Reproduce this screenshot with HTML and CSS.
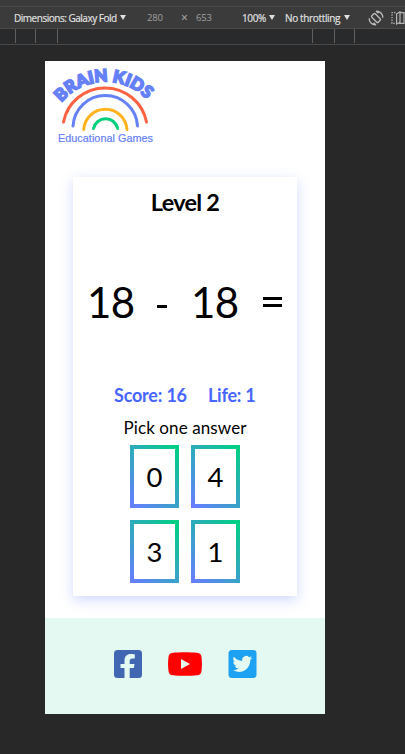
FILE: index.html
```
<!DOCTYPE html>
<html lang="en">
<head>
<meta charset="utf-8">
<title>Brain Kids</title>
<link rel="stylesheet" href="styles.css">
</head>
<body>
<div class="topline"></div>
<header class="toolbar">
  <span class="device">Dimensions: Galaxy Fold</span><i class="caret"></i>
  <span class="dim width">280</span>
  <span class="times">×</span>
  <span class="dim height">653</span>
  <span class="zoom">100%</span><i class="caret"></i>
  <span class="throttle">No throttling</span><i class="caret"></i>
  <svg class="rotate" width="16" height="16" viewBox="0 0 16 16" fill="none" stroke="#bdbdbd" stroke-width="1.3">
    <rect x="5.6" y="3.5" width="4.8" height="9" rx="1" transform="rotate(-45 8 8)"/>
    <path d="M8.2 1.2C12 1 15 4 14.8 7.8M7.8 14.8C4 15 1 12 1.2 8.2M8 1l2.5 2.3M8 15l-2.5-2.3"/>
  </svg>
  <svg class="posture" width="14" height="14" viewBox="0 0 14 14" fill="none" stroke="#b5b5b5" stroke-width="1.2">
    <path d="M4.5 1.6H1v10.8h3.500" stroke-dasharray="1.4 1.2"/>
    <path d="M5.600 3L9 .8v10.400L5.600 13zM9 1.600h4v10.800H8"/>
  </svg>
</header>
<div class="ruler"><i></i><i></i><i></i><i></i><i></i><i></i></div>
<main class="phone">
  <svg class="logo" width="108" height="84" viewBox="0 0 108 84">
    <defs><path id="arc" d="M9.500 38.500A57 57 0 0 1 97.500 38.500"/></defs>
    <text class="brand"><textPath href="#arc" textLength="96" lengthAdjust="spacingAndGlyphs">BRAIN KIDS</textPath></text>
    <g fill="none" stroke-width="3" stroke-linecap="round">
      <path stroke="#ff6243" d="M11.500 58A42.300 42.300 0 0 1 94.500 58"/>
      <path stroke="#6680f8" d="M21 62A32.300 32.300 0 0 1 85.500 62"/>
      <path stroke="#ffb31f" d="M31.700 65.500A21.700 21.700 0 0 1 75 65.500"/>
      <path stroke="#00cf7e" d="M41.500 64.500A12.400 12.400 0 0 1 65.700 64.500"/>
    </g>
    <text class="tag" x="6" y="77.500" textLength="95">Educational Games</text>
  </svg>
  <section class="card">
    <h1>Level 2</h1>
    <div class="question"><span>18</span><span class="minus"></span><span>18</span><span class="equals"></span></div>
    <div class="status"><span class="score">Score: 16</span><span class="life">Life: 1</span></div>
    <p>Pick one answer</p>
    <div class="answers">
      <button>0</button><button>4</button><button>3</button><button>1</button>
    </div>
  </section>
  <footer>
    <svg width="28" height="28" viewBox="0 0 28 28"><rect width="28" height="28" rx="3.500" fill="#4267b2"/><path fill="#e4f9f1" d="M10.500 28V18H6.500v-4h4v-3.500c0-4.300 2.500-6.500 6.300-6.500 1.900 0 4 .4 4 .4v4H18.500c-2.300 0-2.800 1.300-2.800 2.700V14h4.800l-.7 4h-4.100v10z"/></svg>
    <svg width="34" height="24" viewBox="0 0 34 24"><path fill="#f00" d="M5 .7C12 0 22 0 29 .7c3 .3 4.200 1.600 4.500 4.300.6 4.500.6 9.500 0 14-.3 2.700-1.500 4-4.500 4.300-7 .7-17 .7-24 0C2 23 .8 21.700.5 19c-.6-4.500-.6-9.500 0-14C.8 2.300 2 1 5 .7z"/><path fill="#e4f9f1" d="M13 7l9 5-9 5z"/></svg>
    <svg width="29" height="28" viewBox="0 0 29 28"><rect x=".5" width="28" height="28" rx="3.500" fill="#1da1f2"/><path fill="#e4f9f1" transform="translate(4.600 4.100) scale(.82)" d="M23.950 4.570a10 10 0 0 1-2.820.77 4.960 4.960 0 0 0 2.160-2.720c-.95.550-2 .950-3.130 1.180a4.920 4.920 0 0 0-8.380 4.480C7.690 8.100 4.070 6.130 1.640 3.160a4.920 4.920 0 0 0 1.520 6.570 4.900 4.900 0 0 1-2.230-.610v.060a4.920 4.920 0 0 0 3.950 4.830 5 5 0 0 1-2.210.080 4.940 4.940 0 0 0 4.600 3.420A9.870 9.870 0 0 1 0 19.540a14 14 0 0 0 7.550 2.210c9.050 0 14-7.500 14-13.980 0-.210 0-.420-.020-.630a9.940 9.940 0 0 0 2.420-2.570z"/></svg>
  </footer>
</main>
</body>
</html>
```
FILE: styles.css
```
* { box-sizing: border-box; }
body { margin: 0; background: #282828; height: 754px; overflow: hidden; font-family: Lato, sans-serif; }
.topline { height: 7px; background: #3b3b3b; border-bottom: 1px solid #484848; }
.toolbar { height: 22px; background: #3b3b3b; border-bottom: 1px solid #4c4c4c; display: flex; align-items: center; padding-left: 14px; font: 10px/20px "Open Sans", sans-serif; color: #e4e4e4; white-space: nowrap; }
.toolbar > * { flex: none; }
.device { width: 104px; letter-spacing: -.48px; -webkit-text-stroke: .15px; }
.caret { width: 6px; height: 5px; margin-left: 2px; background: #e0e0e0; clip-path: polygon(0 0, 100% 0, 50% 100%); }
.dim { color: #a0a0a0; font-size: 9.500px; letter-spacing: -.2px; }
.width { margin-left: 21px; width: 34px; }
.times { width: 15px; font-size: 12px; color: #b8b8b8; }
.height { width: 46px; }
.zoom { width: 25px; letter-spacing: -.4px; -webkit-text-stroke: .15px; }
.throttle { margin-left: 10px; width: 57px; letter-spacing: -.35px; -webkit-text-stroke: .15px; }
.rotate { margin-left: 18px; }
.posture { margin-left: 7px; }
.ruler { height: 16px; background: #292a2c; border-bottom: 1px solid #4a4a4a; display: flex; }
.ruler i { width: 1px; height: 14px; background: #606060; margin-left: 19px; }
.ruler i:nth-child(1) { margin-left: 15px; }
.ruler i:nth-child(3) { margin-left: 21px; }
.ruler i:nth-child(4) { margin-left: 254px; }
.ruler i:nth-child(5) { margin-left: 21px; }
.phone { width: 280px; height: 653px; margin: 16px 0 0 45px; background: #fff; display: flex; flex-direction: column; overflow: hidden; }
.logo { margin: 3px 0 0 7px; flex: none; overflow: visible; }
.brand { font: 900 17px Lato, sans-serif; fill: #6680f8; stroke: #6680f8; stroke-width: 1.700px; }
.tag { font: 10.800px "Liberation Sans", sans-serif; fill: #6680f8; stroke: #6680f8; stroke-width: .2px; }
.card { width: 224px; height: 419px; flex: none; margin: 29px 28px 22px; box-shadow: 0 4px 12px rgba(72, 102, 255, .25); display: flex; flex-direction: column; align-items: center; color: #000; }
h1 { margin: 9px 0 0; font: 700 23.500px/32px Lato, sans-serif; letter-spacing: -.75px; }
.question { margin-top: 54px; width: 100%; height: 60px; display: flex; align-items: center; padding-left: 14px; font-size: 42px; line-height: 60px; }
.question span { width: 48px; flex: none; letter-spacing: -.5px; }
.question .minus { width: 10px; height: 3px; background: #000; margin: 8px 27px 0 22px; }
.question span:nth-child(3) { margin-left: -3px; }
.question .equals { width: 19px; height: 10px; border: solid #000; border-width: 3px 0; margin: 0 0 0 24px; }
.status { width: 100%; height: 24px; margin-top: 51px; padding-left: 41px; display: flex; font: 700 18px/24px Lato, sans-serif; color: #4866ff; }
.score { width: 94px; letter-spacing: -.2px; }
.life { letter-spacing: -.25px; }
.card p { margin: 9px 0 0; font-size: 17px; line-height: 24px; letter-spacing: .1px; white-space: nowrap; }
.answers { margin-top: 5px; display: grid; grid-template-columns: 49px 49px; grid-auto-rows: 63px; gap: 12px; }
.answers button { padding: 0; border: 4px solid; border-image: linear-gradient(45deg, #667eff, #00d084) 1; background: #fff; font: 27.500px/55px Lato, sans-serif; color: #000; }
footer { height: 96px; background: #e4f9f1; display: flex; align-items: center; justify-content: center; gap: 26px; padding-bottom: 4px; flex: none; }
```
